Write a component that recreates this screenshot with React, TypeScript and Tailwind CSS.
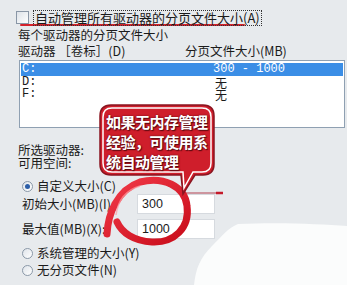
import React from 'react';

const FONT = '"Noto Sans CJK SC", "Liberation Sans", sans-serif';
const MONO = '"Liberation Mono", monospace';

function Radio({ checked }: { checked?: boolean }) {
  return (
    <span className="w-[11px] h-[11px] rounded-full border border-[#8a98a8] bg-gradient-to-br from-[#dfe4ea] to-white flex items-center justify-center shrink-0">
      {checked && <span className="w-[5px] h-[5px] rounded-full bg-[#2c5ea8]" />}
    </span>
  );
}

export default function App() {
  return (
    <div
      className="relative w-[347px] h-[285px] overflow-hidden bg-[#e7eaed] text-[#1b1b1b] text-[12.5px] leading-[12px]"
      style={{ fontFamily: FONT }}
    >
      {/* top checkbox row */}
      <div className="flex items-center h-[17px] mt-[9px] pl-[16px]">
        <span className="w-[13px] h-[13px] border border-[#8996a6] bg-gradient-to-br from-[#dde2e8] to-white shrink-0" />
        <span className="ml-[4px] border border-dotted border-[#333] px-[1px] h-[16px] flex items-center text-[13px]">
          自动管理所有驱动器的分页文件大小(A)
        </span>
      </div>
      <div className="ml-[20px] -mt-[2px] w-[225px] h-[2px] bg-[#d3222c] rounded-full" />

      <div className="pl-[18px] h-[14px] mt-[2px] flex items-center">每个驱动器的分页文件大小</div>
      <div className="pl-[18px] h-[14px] mt-[2px] flex items-center">
        <span className="w-[167px]">驱动器 ［卷标］(D)</span>
        <span>分页文件大小(MB)</span>
      </div>

      {/* list box */}
      <div className="ml-[19px] mr-[2px] mt-[2px] h-[68px] border border-[#8fa0b2] bg-white pt-[2px] px-[1px] text-[12px] leading-[11px]">
        <div className="flex items-center h-[13px] bg-[#3b8ee6] text-white" style={{ fontFamily: MONO }}>
          <span className="w-[192px] pl-[1px]">C:</span>
          <span>300 - 1000</span>
        </div>
        <div className="flex items-center h-[12px]">
          <span className="w-[194px] pl-[1px]" style={{ fontFamily: MONO }}>D:</span>
          <span>无</span>
        </div>
        <div className="flex items-center h-[12px]">
          <span className="w-[194px] pl-[1px]" style={{ fontFamily: MONO }}>F:</span>
          <span>无</span>
        </div>
      </div>

      <div className="pl-[18px] mt-[15px] h-[13px] flex items-center">所选驱动器:</div>
      <div className="pl-[18px] h-[14px] flex items-center">可用空间:</div>

      <div className="pl-[22px] mt-[9px] h-[14px] flex items-center gap-[4px]">
        <Radio checked />
        <span>自定义大小(C)</span>
      </div>

      <div className="pl-[22px] flex items-center h-[21px]">
        <span className="w-[115px]">初始大小(MB)(I):</span>
        <span className="w-[78px] h-[20px] bg-white border border-[#d6dadf] flex items-center pl-[4px]" style={{ fontFamily: '"Liberation Sans", sans-serif' }}>300</span>
      </div>
      <div className="pl-[22px] mt-[4px] flex items-center h-[21px]">
        <span className="w-[115px]">最大值(MB)(X):</span>
        <span className="w-[78px] h-[20px] bg-white border border-[#d6dadf] flex items-center pl-[4px]" style={{ fontFamily: '"Liberation Sans", sans-serif' }}>1000</span>
      </div>

      <div className="pl-[22px] mt-[7px] h-[14px] flex items-center gap-[4px]">
        <Radio />
        <span>系统管理的大小(Y)</span>
      </div>
      <div className="pl-[22px] mt-[3px] h-[14px] flex items-center gap-[4px]">
        <Radio />
        <span>无分页文件(N)</span>
      </div>

      {/* white scan blob bottom right */}
      <svg className="absolute left-0 top-0" width="347" height="285">
        <path d="M238 224 C 280 222, 320 224, 347 226 L347 285 L194 285 C 196 268, 200 258, 212 246 C 222 236, 228 228, 238 224 Z" fill="#fbfcfc" />
      </svg>

      {/* hand-drawn red circle and pointer lines */}
      <svg className="absolute left-0 top-0" width="347" height="285">
        <defs>
          <linearGradient id="rg" x1="0" y1="0" x2="1" y2="1">
            <stop offset="0" stopColor="#f23a48" />
            <stop offset="1" stopColor="#c80c1a" />
          </linearGradient>
        </defs>
        <path d="M182 192 L160 182" stroke="#c42a3a" strokeWidth="1" fill="none" />
        <path d="M182 192 L172 183" stroke="#c42a3a" strokeWidth="1" fill="none" />
        <path d="M186 193 L222 193" stroke="#b34050" strokeWidth="1" fill="none" />
        <path d="M216 193 L223 193" stroke="#c41a2a" strokeWidth="2.5" fill="none" />
        <path
          d="M107 234 C 108 214, 117 190, 140 182 C 163 176, 185 186, 187 206 C 190 228, 174 243, 152 242 C 134 241, 122 233, 117 222"
          stroke="url(#rg)"
          strokeWidth="7"
          strokeLinecap="round"
          fill="none"
        />
        <path
          d="M116 215 C 118 200, 126 190, 140 186"
          stroke="#ff9aa0"
          strokeOpacity="0.7"
          strokeWidth="1.5"
          fill="none"
        />
      </svg>

      {/* callout bubble */}
      <div className="absolute left-[99px] top-[104px] w-[116px] h-[72px]">
        <svg className="absolute left-0 top-0 overflow-visible" width="116" height="90">
          <path
            d="M12 1 H104 Q115 1 115 12 V60 Q115 71 104 71 H96 L84 90 L82 71 H12 Q1 71 1 60 V12 Q1 1 12 1 Z"
            fill="#cf1e2b"
            stroke="#8a1520"
            strokeWidth="1.5"
          />
          <path
            d="M13 4 H103 Q112 4 112 13 V59 Q112 68 103 68 H94 L85 84 L84 68 H13 Q4 68 4 59 V13 Q4 4 13 4 Z"
            fill="none"
            stroke="#ffffff"
            strokeWidth="1.5"
          />
        </svg>
        <div
          className="relative pl-[7px] pt-[8px] text-white font-bold text-[15px] leading-[20px] tracking-[-0.5px]"
          style={{ textShadow: '0 0 2px #5a0a10, 1px 1px 1px #5a0a10' }}
        >
          <div>如果无内存管理</div>
          <div>经验，可使用系</div>
          <div>统自动管理</div>
        </div>
      </div>
    </div>
  );
}
